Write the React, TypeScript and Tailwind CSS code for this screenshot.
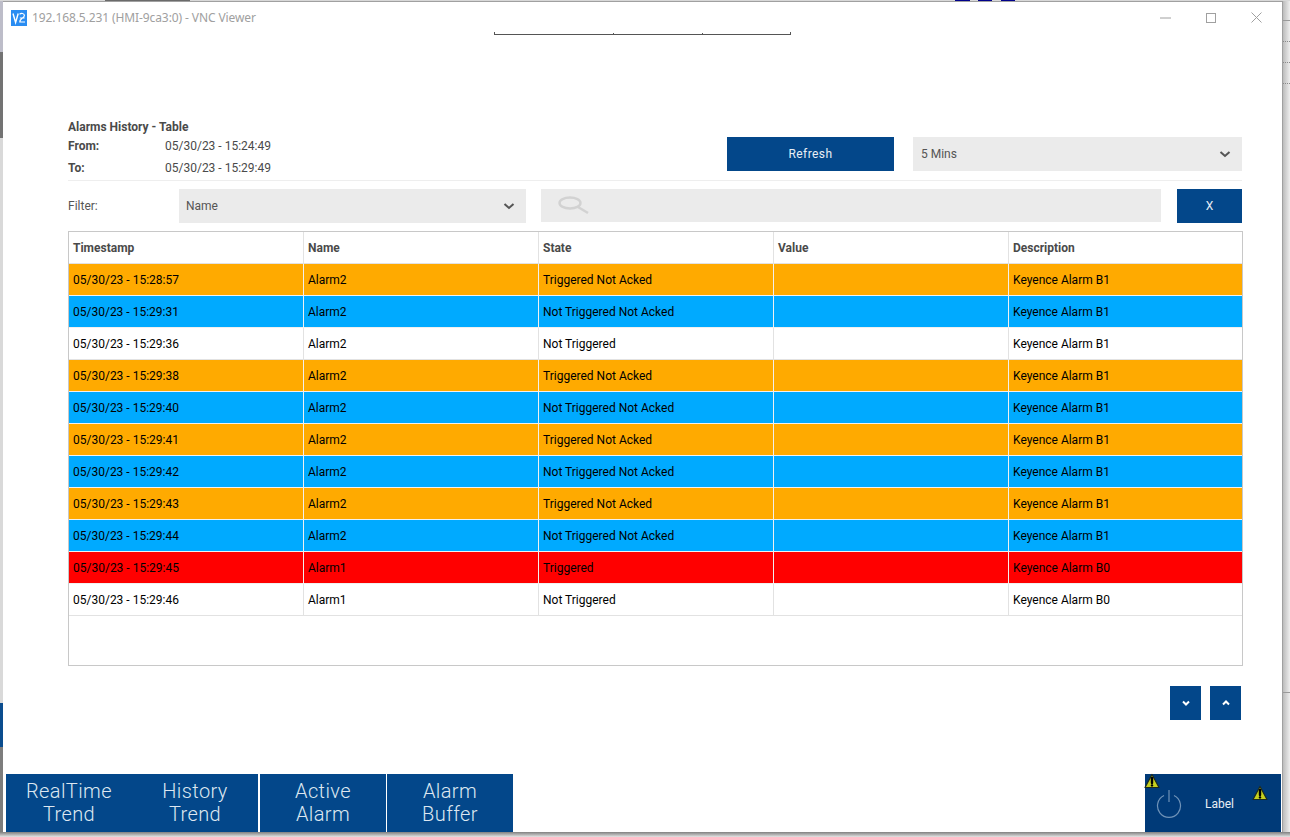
import React from "react";

type Tone = "o" | "b" | "w" | "r";
const rows: [string, string, string, string, Tone][] = [
  ["05/30/23 - 15:28:57", "Alarm2", "Triggered Not Acked", "Keyence Alarm B1", "o"],
  ["05/30/23 - 15:29:31", "Alarm2", "Not Triggered Not Acked", "Keyence Alarm B1", "b"],
  ["05/30/23 - 15:29:36", "Alarm2", "Not Triggered", "Keyence Alarm B1", "w"],
  ["05/30/23 - 15:29:38", "Alarm2", "Triggered Not Acked", "Keyence Alarm B1", "o"],
  ["05/30/23 - 15:29:40", "Alarm2", "Not Triggered Not Acked", "Keyence Alarm B1", "b"],
  ["05/30/23 - 15:29:41", "Alarm2", "Triggered Not Acked", "Keyence Alarm B1", "o"],
  ["05/30/23 - 15:29:42", "Alarm2", "Not Triggered Not Acked", "Keyence Alarm B1", "b"],
  ["05/30/23 - 15:29:43", "Alarm2", "Triggered Not Acked", "Keyence Alarm B1", "o"],
  ["05/30/23 - 15:29:44", "Alarm2", "Not Triggered Not Acked", "Keyence Alarm B1", "b"],
  ["05/30/23 - 15:29:45", "Alarm1", "Triggered", "Keyence Alarm B0", "r"],
  ["05/30/23 - 15:29:46", "Alarm1", "Not Triggered", "Keyence Alarm B0", "w"],
];

const toneClass: Record<Tone, string> = {
  o: "bg-[#ffaa00] border-[#f0f0f0]",
  b: "bg-[#00aaff] border-[#f0f0f0]",
  r: "bg-[#ff0000] border-[#f0f0f0]",
  w: "bg-white border-[#e2e2e2]",
};

function Chevron({ up = false, color = "#555555" }: { up?: boolean; color?: string }) {
  return (
    <svg width="12" height="8" viewBox="0 0 12 8" fill="none" className="block">
      <path d={up ? "M1.5 6 L6 2 L10.5 6" : "M1.5 2 L6 6 L10.5 2"} stroke={color} strokeWidth="2" />
    </svg>
  );
}

function Warning({ className }: { className: string }) {
  return (
    <svg width="16" height="16" viewBox="0 0 16 16" className={className}>
      <path d="M8 1.5 L15 14.5 L1 14.5 Z" fill="#c6d01f" stroke="#1c2a20" strokeWidth="1.2" strokeLinejoin="round" />
      <path d="M8 5 L8 10" stroke="#000000" strokeWidth="2.4" strokeLinecap="round" />
      <circle cx="8" cy="12.4" r="1.2" fill="#000000" />
    </svg>
  );
}

function Cell({ children, className = "" }: { children?: React.ReactNode; className?: string }) {
  return (
    <div className={`w-[235px] shrink-0 h-full border-r border-inherit pl-[4px] flex items-center last:border-r-0 ${className}`}>
      {children}
    </div>
  );
}

function NavButton({ a, b }: { a: string; b: string }) {
  return (
    <div className="w-[126px] h-full flex flex-col items-center justify-center text-[20px] leading-[23px] tracking-[0.4px] text-[#dde7f1] font-light">
      <span>{a}</span>
      <span>{b}</span>
    </div>
  );
}

export default function App() {
  return (
    <div className="w-[1290px] h-[837px] overflow-hidden bg-[#e8e8e8] flex flex-col font-['Roboto',sans-serif] text-[12px]">
      {/* desktop strip behind the top edge of the window */}
      <div className="h-px flex shrink-0 bg-[#d8d8d8]">
        <div className="ml-[105px] w-[85px] bg-[#6a6a6a]" />
        <div className="ml-[765px] w-[15px] bg-[#00008b]" />
        <div className="ml-[8px] w-[14px] bg-[#00008b]" />
        <div className="ml-[9px] w-[14px] bg-[#00008b]" />
      </div>

      <div className="flex-1 flex min-h-0">
        {/* desktop strip left of the window */}
        <div className="w-[3px] shrink-0 flex flex-col">
          <div className="h-[51px] bg-[#bdbdc9]" />
          <div className="h-[86px] bg-[#737373]" />
          <div className="h-[565px] bg-[#d9d9d9]" />
          <div className="h-[44px] bg-[#0b4d8e]" />
          <div className="flex-1 bg-[#7d7d7d]" />
        </div>

        {/* VNC window */}
        <div className="w-[1280px] shrink-0 bg-white border-t border-r border-[#a0a0a0] flex flex-col">
          <div className="h-[30px] shrink-0 flex items-center pl-[8px] pt-[1px]">
            <svg width="16" height="16" viewBox="0 0 16 16" className="shrink-0">
              <rect width="16" height="16" fill="#2a8df2" />
              <path d="M2 3.5 L4.6 12.5 L7.2 3.5" fill="none" stroke="#ffffff" strokeWidth="1.4" />
              <path d="M8.6 4.2 C10 3 13.4 3 13.4 5.6 C13.4 8 8.8 8.4 8.8 12 L14 12 M8.8 8 L13.6 8" fill="none" stroke="#ffffff" strokeWidth="1.2" />
            </svg>
            <span className="ml-[5px] text-[#a0a0a0] text-[12px] font-['Noto_Sans',sans-serif] tracking-[-0.1px]">192.168.5.231 (HMI-9ca3:0) - VNC Viewer</span>
            <div className="ml-auto flex items-center mr-[20px]">
              <svg width="11" height="2" viewBox="0 0 11 2"><path d="M0 1 H11" stroke="#a0a0a0" strokeWidth="1" /></svg>
              <svg width="10" height="10" viewBox="0 0 10 10" className="ml-[35px]"><rect x="0.5" y="0.5" width="9" height="9" fill="none" stroke="#a0a0a0" strokeWidth="1" /></svg>
              <svg width="11" height="11" viewBox="0 0 11 11" className="ml-[35px]"><path d="M0.5 0.5 L10.5 10.5 M10.5 0.5 L0.5 10.5" stroke="#a0a0a0" strokeWidth="1" /></svg>
            </div>
          </div>

          {/* remains of a scrolled-off table */}
          <div className="ml-[491px] w-[297px] h-[3px] border-b border-x border-[#555555] flex shrink-0">
            <div className="ml-[118px] w-px h-[1px] mt-[1px] bg-[#555555]" />
            <div className="ml-[88px] w-px h-[1px] mt-[1px] bg-[#555555]" />
          </div>

          <div className="flex-1 min-h-0 flex flex-col">
            <div className="pl-[65px] pr-[39px] pt-[83px] flex flex-col">
              {/* header */}
              <div className="h-[63px] border-b border-[#eeeeee] flex justify-between mr-[1px]">
                <div className="flex flex-col text-[#4a4a4a]">
                  <div className="h-[17px] flex items-center font-bold">Alarms History - Table</div>
                  <div className="h-[22px] flex items-center">
                    <span className="w-[97px] font-bold">From:</span>
                    <span>05/30/23 - 15:24:49</span>
                  </div>
                  <div className="h-[22px] flex items-center">
                    <span className="w-[97px] font-bold">To:</span>
                    <span>05/30/23 - 15:29:49</span>
                  </div>
                </div>
                <div className="flex gap-[19px] pt-[19px]">
                  <div className="w-[167px] h-[34px] bg-[#03478a] text-[#e8eef5] flex items-center justify-center tracking-[0.4px]">Refresh</div>
                  <div className="w-[329px] h-[34px] bg-[#ebebeb] text-[#555555] flex items-center justify-between pl-[8px] pr-[11px]">
                    <span>5 Mins</span>
                    <Chevron />
                  </div>
                </div>
              </div>

              {/* filter */}
              <div className="mt-[8px] h-[34px] flex items-start mr-[1px]">
                <div className="w-[111px] h-[34px] flex items-center text-[#555555]">Filter:</div>
                <div className="w-[347px] h-[34px] bg-[#ebebeb] text-[#555555] flex items-center justify-between pl-[7px] pr-[11px]">
                  <span>Name</span>
                  <Chevron />
                </div>
                <div className="ml-[15px] w-[621px] h-[33px] bg-[#ebebeb] flex items-center pl-[17px]">
                  <svg width="32" height="19" viewBox="0 0 32 19" className="mb-[1px]">
                    <ellipse cx="12" cy="7" rx="10.5" ry="5.5" fill="none" stroke="#d2d2d2" strokeWidth="2.4" />
                    <path d="M20 11 L30 17" stroke="#d2d2d2" strokeWidth="2.6" />
                  </svg>
                </div>
                <div className="ml-[16px] w-[65px] h-[34px] bg-[#03478a] text-[#e8eef5] flex items-center justify-center">X</div>
              </div>

              {/* table */}
              <div className="mt-[8px] h-[435px] border border-[#c8c8c8] flex flex-col">
                <div className="h-[32px] flex shrink-0 border-b border-[#e2e2e2] font-bold text-[#4a4a4a]">
                  <Cell>Timestamp</Cell>
                  <Cell>Name</Cell>
                  <Cell>State</Cell>
                  <Cell>Value</Cell>
                  <Cell>Description</Cell>
                </div>
                {rows.map((r, i) => (
                  <div key={i} className={`h-[32px] flex shrink-0 border-b text-black ${toneClass[r[4]]}`}>
                    <Cell>{r[0]}</Cell>
                    <Cell>{r[1]}</Cell>
                    <Cell>{r[2]}</Cell>
                    <Cell />
                    <Cell>{r[3]}</Cell>
                  </div>
                ))}
              </div>

              {/* pager */}
              <div className="mt-[20px] flex justify-end gap-[9px] pr-[2px]">
                <div className="w-[31px] h-[34px] bg-[#03478a] flex items-center justify-center">
                  <svg width="8" height="6" viewBox="0 0 8 6"><path d="M1 1.5 L4 4.5 L7 1.5" fill="none" stroke="#ffffff" strokeWidth="2" /></svg>
                </div>
                <div className="w-[31px] h-[34px] bg-[#03478a] flex items-center justify-center">
                  <svg width="8" height="6" viewBox="0 0 8 6"><path d="M1 4.5 L4 1.5 L7 4.5" fill="none" stroke="#ffffff" strokeWidth="2" /></svg>
                </div>
              </div>
            </div>

            {/* footer nav */}
            <div className="mt-auto h-[58px] shrink-0 flex pl-[3px] pr-px">
              <div className="flex bg-[#03478a] h-full">
                <NavButton a="RealTime" b="Trend" />
                <NavButton a="History" b="Trend" />
              </div>
              <div className="ml-[2px] bg-[#03478a] h-full"><NavButton a="Active" b="Alarm" /></div>
              <div className="ml-px bg-[#03478a] h-full"><NavButton a="Alarm" b="Buffer" /></div>
              <div className="relative ml-auto w-[136px] h-full bg-[#003a78] flex items-center text-[#e8eef5]">
                <svg width="26" height="30" viewBox="0 0 26 30" className="ml-[11px] mt-[1px]">
                  <path d="M8 6.5 A11.5 11.5 0 1 0 18 6.5" fill="none" stroke="#6f93b8" strokeWidth="1.2" />
                  <path d="M13 1 V13" stroke="#6f93b8" strokeWidth="1.2" />
                </svg>
                <span className="ml-[23px] mt-[1px]">Label</span>
                <Warning className="absolute left-[-1px] top-[-1px]" />
                <Warning className="absolute left-[107px] top-[11px]" />
              </div>
            </div>
          </div>
        </div>

        {/* desktop strip right of the window */}
        <div className="flex-1 bg-gradient-to-r from-[#bcbcbc] to-[#eeeeee] flex flex-col">
          <div className="mt-[19px] h-px bg-[#9a9a9a]" />
          <div className="mt-[20px] h-px border-t border-dotted border-[#8a8a8a]" />
          <div className="mt-[20px] h-px border-t border-dotted border-[#8a8a8a]" />
          <div className="mt-[20px] h-px border-t border-dotted border-[#8a8a8a]" />
          <div className="mt-[608px] h-px bg-[#9a9a9a]" />
        </div>
      </div>

      {/* desktop strip below the window */}
      <div className="h-[5px] shrink-0 bg-gradient-to-b from-[#808080] to-[#e4e4e4]" />
    </div>
  );
}
